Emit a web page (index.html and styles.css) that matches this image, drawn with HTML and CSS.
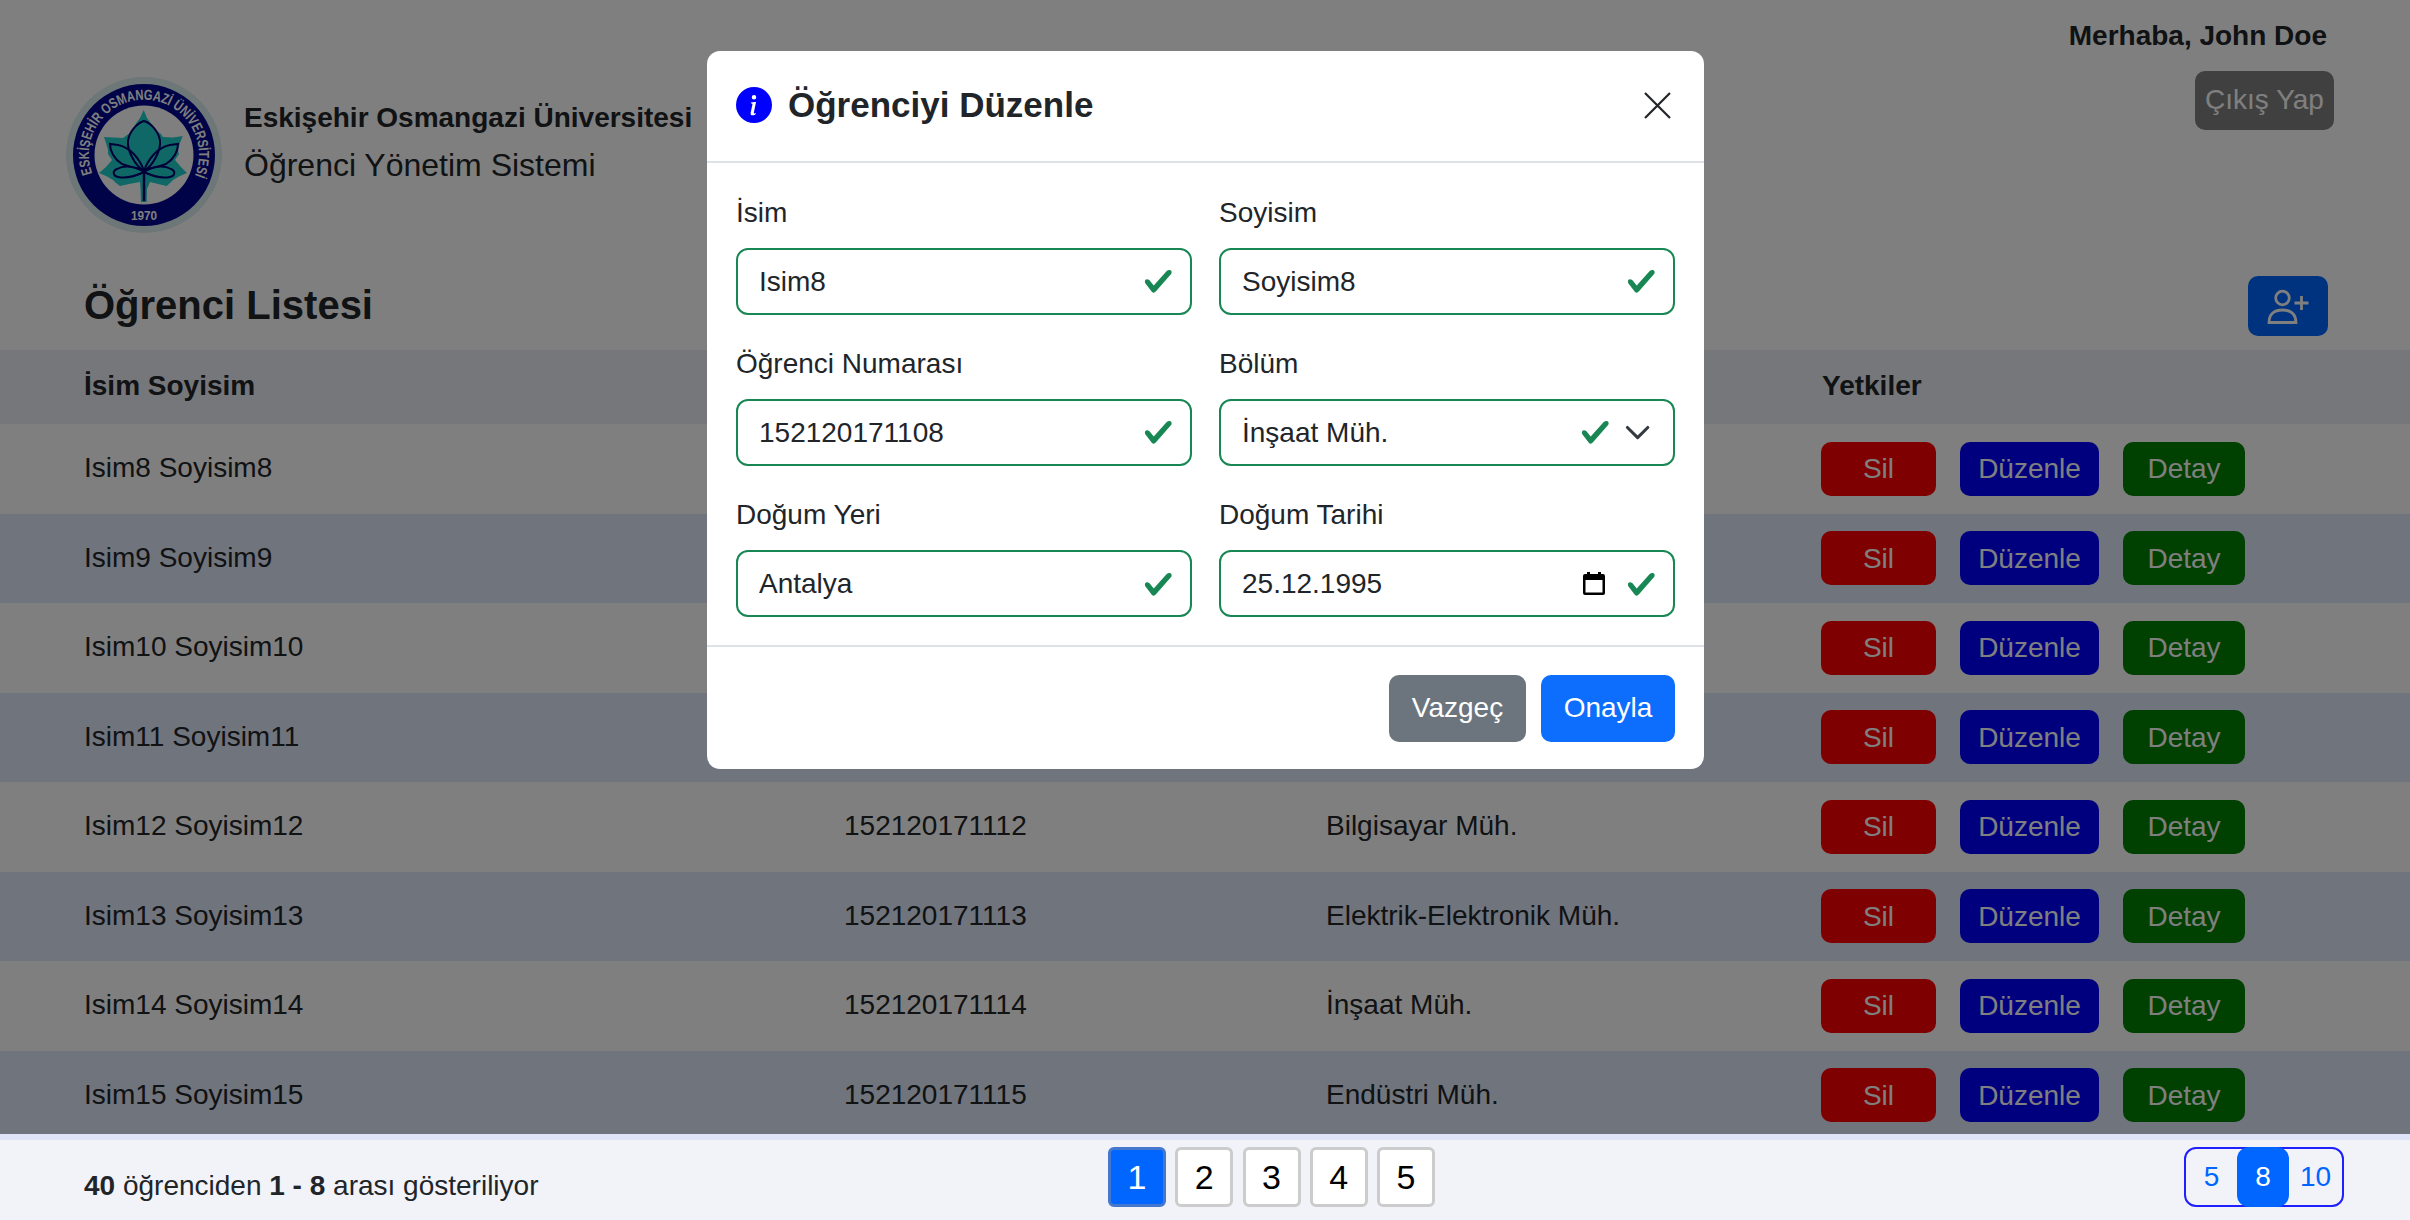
FILE: index.html
```html
<!DOCTYPE html>
<html lang="tr">
<head>
<meta charset="utf-8">
<title>Öğrenci Yönetim Sistemi</title>
<link rel="stylesheet" href="styles.css">
</head>
<body>
<div class="page">
  <main class="content">
    <header class="site-header">
      <div class="brand">
        <svg class="logo" viewBox="0 0 156 156" aria-hidden="true">
          <defs><path id="ring-path" d="M26.300 96.700A55 55 0 1 1 128.600 99"/></defs>
          <circle cx="78" cy="78" r="78" fill="#dcefee"/>
          <circle cx="78" cy="78" r="71" fill="#00068e"/>
          <circle cx="78" cy="78" r="49.500" fill="#fff"/>
          <text class="logo-ring"><textPath href="#ring-path" textLength="213" lengthAdjust="spacingAndGlyphs">ESKİŞEHİR OSMANGAZİ ÜNİVERSİTESİ</textPath></text>
          <text class="logo-year" x="78" y="143" text-anchor="middle" textLength="26" lengthAdjust="spacingAndGlyphs">1970</text>
          <path fill="#1fd0cc" d="M77.700 33 81 41 84 45 90.700 54.700 94 56 97 60 107 60.500 116.700 59 114 66 112 73 113 77 109 83 115 90 121 96 114 99 107 103 104 106 100.700 109 92 107 84 105 81 112 80.700 125 75 125 74.500 112 74 105 63 107 54 109 50 106 47 103 40 99 33 96 40 90 46 83 42 77 42 73 40 66 38 60 48 60.500 57 61 61 58 65.700 55 68 50 71 45 74 41z"/>
          <g fill="none" stroke="#000070" stroke-width="2">
            <path d="M78 94C68 88 61 72 62 64 63 55 71 46 78 44 85 46 93 55 94 64 95 72 88 88 78 94Z"/>
            <path d="M78 94C74 82 64 70 52 68L44 67C44 74 48 82 56 87 64 90 72 91 78 94Z"/>
            <path d="M78 94C82 82 92 70 104 68L112 67C112 74 108 82 100 87 92 90 84 91 78 94Z"/>
            <path d="M78 95C70 89 58 88 51 92 46 94 47 99 52 100 62 102 72 98 78 95Z"/>
            <path d="M78 95C86 89 98 88 105 92 110 94 109 99 104 100 94 102 84 98 78 95Z"/>
            <path d="M78 94V124" stroke-width="2.500"/>
          </g>
        </svg>
        <div class="brand-text">
          <strong class="brand-name">Eskişehir Osmangazi Üniversitesi</strong>
          <span class="brand-sub">Öğrenci Yönetim Sistemi</span>
        </div>
      </div>
      <div class="user-box">
        <span class="greeting">Merhaba, John Doe</span>
        <button class="btn btn-exit" type="button">Çıkış Yap</button>
      </div>
    </header>

    <div class="title-bar">
      <h1 class="list-title">Öğrenci Listesi</h1>
      <button class="btn btn-add" type="button" aria-label="Öğrenci ekle">
        <svg class="add-icon" viewBox="0 0 42 38" aria-hidden="true">
          <circle cx="15.500" cy="11" r="6.800"/>
          <path d="M2 35.500C2 26.500 8 23 15.500 23S29 26.500 29 35.500Z"/>
          <path d="M34.500 9V23M27.500 16H41.500"/>
        </svg>
      </button>
    </div>

    <section class="table">
      <div class="row row-head">
        <span>İsim Soyisim</span><span>Öğrenci Numarası</span><span>Bölüm</span><span>Yetkiler</span>
      </div>
      <div class="row">
        <span>Isim8 Soyisim8</span><span>152120171108</span><span>İnşaat Müh.</span>
        <span class="actions"><button class="btn btn-del" type="button">Sil</button><button class="btn btn-edit" type="button">Düzenle</button><button class="btn btn-info" type="button">Detay</button></span>
      </div>
      <div class="row">
        <span>Isim9 Soyisim9</span><span>152120171109</span><span>Endüstri Müh.</span>
        <span class="actions"><button class="btn btn-del" type="button">Sil</button><button class="btn btn-edit" type="button">Düzenle</button><button class="btn btn-info" type="button">Detay</button></span>
      </div>
      <div class="row">
        <span>Isim10 Soyisim10</span><span>152120171110</span><span>Makine Müh.</span>
        <span class="actions"><button class="btn btn-del" type="button">Sil</button><button class="btn btn-edit" type="button">Düzenle</button><button class="btn btn-info" type="button">Detay</button></span>
      </div>
      <div class="row">
        <span>Isim11 Soyisim11</span><span>152120171111</span><span>Kimya Müh.</span>
        <span class="actions"><button class="btn btn-del" type="button">Sil</button><button class="btn btn-edit" type="button">Düzenle</button><button class="btn btn-info" type="button">Detay</button></span>
      </div>
      <div class="row">
        <span>Isim12 Soyisim12</span><span>152120171112</span><span>Bilgisayar Müh.</span>
        <span class="actions"><button class="btn btn-del" type="button">Sil</button><button class="btn btn-edit" type="button">Düzenle</button><button class="btn btn-info" type="button">Detay</button></span>
      </div>
      <div class="row">
        <span>Isim13 Soyisim13</span><span>152120171113</span><span>Elektrik-Elektronik Müh.</span>
        <span class="actions"><button class="btn btn-del" type="button">Sil</button><button class="btn btn-edit" type="button">Düzenle</button><button class="btn btn-info" type="button">Detay</button></span>
      </div>
      <div class="row">
        <span>Isim14 Soyisim14</span><span>152120171114</span><span>İnşaat Müh.</span>
        <span class="actions"><button class="btn btn-del" type="button">Sil</button><button class="btn btn-edit" type="button">Düzenle</button><button class="btn btn-info" type="button">Detay</button></span>
      </div>
      <div class="row">
        <span>Isim15 Soyisim15</span><span>152120171115</span><span>Endüstri Müh.</span>
        <span class="actions"><button class="btn btn-del" type="button">Sil</button><button class="btn btn-edit" type="button">Düzenle</button><button class="btn btn-info" type="button">Detay</button></span>
      </div>
    </section>
  </main>

  <footer class="site-footer">
    <p class="count"><b>40</b> öğrenciden <b>1 - 8</b> arası gösteriliyor</p>
    <nav class="pager">
      <a class="page-btn is-active">1</a><a class="page-btn">2</a><a class="page-btn">3</a><a class="page-btn">4</a><a class="page-btn">5</a>
    </nav>
    <div class="size-group">
      <a class="size-btn size-5">5</a><a class="size-btn size-8 is-active">8</a><a class="size-btn size-10">10</a>
    </div>
  </footer>
</div>

<div class="backdrop">
  <div class="modal">
    <div class="modal-head">
      <svg class="info-icon" viewBox="0 0 16 16" aria-hidden="true"><path d="M8 16A8 8 0 1 0 8 0a8 8 0 0 0 0 16zm.93-9.412-1 4.705c-.07.34.029.533.304.533.194 0 .487-.07.686-.246l-.088.416c-.287.346-.92.598-1.465.598-.703 0-1.002-.422-.808-1.319l.738-3.468c.064-.293.006-.399-.287-.47l-.451-.081.082-.381 2.29-.287zM8 5.500a1 1 0 1 1 0-2 1 1 0 0 1 0 2z"/></svg>
      <h2 class="modal-title">Öğrenciyi Düzenle</h2>
      <svg class="close-icon" viewBox="0 0 27 27" aria-hidden="true"><path d="M1 1 26 26M26 1 1 26"/></svg>
    </div>
    <div class="modal-body">
      <div class="group">
        <span class="label">İsim</span>
        <div class="field"><span class="value">Isim8</span>
          <svg class="check" viewBox="0 0 8 8" aria-hidden="true"><path d="M2.300 6.730.6 4.530c-.4-1.040.46-1.400 1.100-.8l1.100 1.400 3.400-3.800c.6-.63 1.600-.27 1.200.7l-4 4.600c-.43.5-.8.4-1.100.1z"/></svg></div>
      </div>
      <div class="group">
        <span class="label">Soyisim</span>
        <div class="field"><span class="value">Soyisim8</span>
          <svg class="check" viewBox="0 0 8 8" aria-hidden="true"><path d="M2.300 6.730.6 4.530c-.4-1.040.46-1.400 1.100-.8l1.100 1.400 3.400-3.800c.6-.63 1.600-.27 1.200.7l-4 4.600c-.43.5-.8.4-1.100.1z"/></svg></div>
      </div>
      <div class="group">
        <span class="label">Öğrenci Numarası</span>
        <div class="field"><span class="value">152120171108</span>
          <svg class="check" viewBox="0 0 8 8" aria-hidden="true"><path d="M2.300 6.730.6 4.530c-.4-1.040.46-1.400 1.100-.8l1.100 1.400 3.400-3.800c.6-.63 1.600-.27 1.200.7l-4 4.600c-.43.5-.8.4-1.100.1z"/></svg></div>
      </div>
      <div class="group">
        <span class="label">Bölüm</span>
        <div class="field"><span class="value">İnşaat Müh.</span>
          <svg class="check" viewBox="0 0 8 8" aria-hidden="true"><path d="M2.300 6.730.6 4.530c-.4-1.040.46-1.400 1.100-.8l1.100 1.400 3.400-3.800c.6-.63 1.600-.27 1.200.7l-4 4.600c-.43.5-.8.4-1.100.1z"/></svg>
          <svg class="chevron" viewBox="0 0 16 16" aria-hidden="true"><path d="m2 5 6 6 6-6"/></svg></div>
      </div>
      <div class="group">
        <span class="label">Doğum Yeri</span>
        <div class="field"><span class="value">Antalya</span>
          <svg class="check" viewBox="0 0 8 8" aria-hidden="true"><path d="M2.300 6.730.6 4.530c-.4-1.040.46-1.400 1.100-.8l1.100 1.400 3.400-3.800c.6-.63 1.600-.27 1.200.7l-4 4.600c-.43.5-.8.4-1.100.1z"/></svg></div>
      </div>
      <div class="group">
        <span class="label">Doğum Tarihi</span>
        <div class="field"><span class="value">25.12.1995</span>
          <svg class="calendar" viewBox="0 0 22 23" aria-hidden="true"><path d="M4 0h3v2h8V0h3v2h2a2 2 0 0 1 2 2v17a2 2 0 0 1-2 2H2a2 2 0 0 1-2-2V4a2 2 0 0 1 2-2h2zM2.500 8v12.500h17V8z"/></svg>
          <svg class="check check-date" viewBox="0 0 8 8" aria-hidden="true"><path d="M2.300 6.730.6 4.530c-.4-1.040.46-1.400 1.100-.8l1.100 1.400 3.400-3.800c.6-.63 1.600-.27 1.200.7l-4 4.600c-.43.5-.8.4-1.100.1z"/></svg></div>
      </div>
    </div>
    <div class="modal-foot">
      <button class="btn btn-cancel" type="button">Vazgeç</button>
      <button class="btn btn-ok" type="button">Onayla</button>
    </div>
  </div>
</div>
</body>
</html>
```
FILE: styles.css
```css
* { box-sizing: border-box; }
html, body { margin: 0; height: 100%; }
body {
  font-family: "Liberation Sans", Arial, sans-serif;
  font-size: 28px;
  line-height: 40.800px;
  color: #212529;
  background: #fff;
  overflow: hidden;
}
.page { height: 100vh; display: flex; flex-direction: column; }
.content { flex: 1; min-height: 0; overflow: hidden; }

/* header */
.site-header { height: 262px; display: flex; justify-content: space-between; }
.brand { display: flex; align-items: flex-start; padding: 77px 0 0 66px; gap: 22px; }
.logo { width: 156px; height: 156px; flex: none; }
.logo-ring { font: 700 14.500px "Liberation Sans", sans-serif; fill: #fff; }
.logo-year { font: 700 13px "Liberation Sans", sans-serif; fill: #fff; }
.brand-text { display: flex; flex-direction: column; padding-top: 21px; }
.brand-name { line-height: 40px; }
.brand-sub { font-size: 32px; line-height: 48px; margin-top: 3px; }
.user-box { display: flex; flex-direction: column; align-items: flex-end; padding: 16px 76px 0 0; }
.greeting { font-weight: 700; line-height: 40px; margin-right: 7px; }

/* buttons */
.btn {
  display: inline-flex; align-items: center; justify-content: center;
  font: inherit; border: 0; color: #fff; padding: 0; border-radius: 10px;
}
.btn-exit { width: 139px; height: 59px; margin-top: 15px; background: #808080; }
.btn-add { width: 80px; height: 60px; background: #0066ff; }
.add-icon { width: 42px; height: 38px; fill: none; stroke: #fff; stroke-width: 2.800; }
.btn-del { width: 115px; height: 54px; padding-top: 2px; background: #f00; }
.btn-edit { width: 139px; height: 54px; padding-top: 2px; background: #00f; }
.btn-info { width: 122px; height: 54px; padding-top: 2px; background: #008000; }
.btn-cancel { width: 137px; height: 67px; background: #6c757d; }
.btn-ok { width: 134px; height: 67px; background: #0d6efd; }

/* title */
.title-bar { height: 88px; display: flex; align-items: center; justify-content: space-between; padding: 0 82px 0 84px; }
.list-title { margin: 0 0 3px; font-size: 40px; line-height: 48px; font-weight: 700; }

/* table */
.row {
  display: grid;
  grid-template-columns: 760px 482px 496px 1fr;
  align-items: center;
  height: 89.500px;
  padding-left: 84px;
}
.row:nth-child(odd) { background: #e0e8fa; }
.row-head { height: 74px; padding-bottom: 2px; font-weight: 700; }
.row:nth-child(1) { background: #eceef4; }
.actions { display: flex; gap: 24px; margin-left: -1px; }

/* footer */
.site-footer {
  position: relative; z-index: 20;
  flex: none; height: 86px;
  display: grid; grid-template-columns: 1024px 1fr auto; grid-template-rows: 60px; align-items: start;
  padding: 7px 66px 0 84px;
  border-top: 6px solid #dfe4f8;
  background: #f1f3f9;
}
.count { margin: 0 0 1px; align-self: end; line-height: 40px; }
.pager { display: flex; gap: 9.250px; }
.page-btn {
  width: 58px; height: 60px; display: flex; align-items: center; justify-content: center;
  font-size: 34px; color: #000; background: #fff;
  border: 3px solid #ccc; border-radius: 6px;
}
.page-btn.is-active { color: #fff; background: #0066ff; border-color: #4478cf; }
.size-group { display: flex; height: 60px; border: 2px solid #1f1fff; border-radius: 12px; }
.size-btn { display: flex; align-items: center; justify-content: center; color: #0066ff; }
.size-5 { width: 51px; }
.size-10 { width: 53px; }
.size-8 { width: 52px; margin: -2px 0; }
.size-btn.is-active { color: #fff; background: #0066ff; border-radius: 12px; }

/* modal */
.backdrop {
  position: fixed; inset: 0; z-index: 10;
  display: flex; justify-content: center; align-items: flex-start;
  padding: 51px 0 0 1px;
  background: rgba(0, 0, 0, .5);
}
.modal { width: 997px; background: #fff; border-radius: 13px; }
.modal-head {
  display: flex; align-items: center; height: 112px;
  padding: 0 33px 2px 29px;
  border-bottom: 2px solid #dee2e6;
}
.info-icon { width: 36px; height: 36px; fill: #00f; flex: none; }
.modal-title { margin: 0 0 0 16px; flex: 1; font-size: 35px; line-height: 48px; font-weight: 700; }
.close-icon { width: 27px; height: 27px; fill: none; stroke: #212529; stroke-width: 2.200; flex: none; }
.modal-body {
  display: grid; grid-template-columns: 456px 456px; column-gap: 27px; row-gap: 29px;
  padding: 30px 29px 28px;
}
.label { display: block; margin-bottom: 14.500px; }
.field {
  display: flex; align-items: center; height: 66.800px;
  padding: 0 16px 0 21px;
  border: 2px solid #198754; border-radius: 12px;
}
.value { flex: 1; padding-top: 1px; }
.check { width: 30.600px; height: 30.600px; fill: #198754; flex: none; }
.chevron { width: 27.200px; height: 27.200px; margin: 0 6px 0 13px; fill: none; stroke: #343a40; stroke-width: 1.800; stroke-linecap: round; stroke-linejoin: round; flex: none; }
.calendar { width: 22px; height: 23px; fill: #000; margin-right: 21px; flex: none; }
.modal-foot {
  display: flex; justify-content: flex-end; gap: 15px;
  padding: 28px 29px 27px;
  border-top: 2px solid #dee2e6;
}
```
